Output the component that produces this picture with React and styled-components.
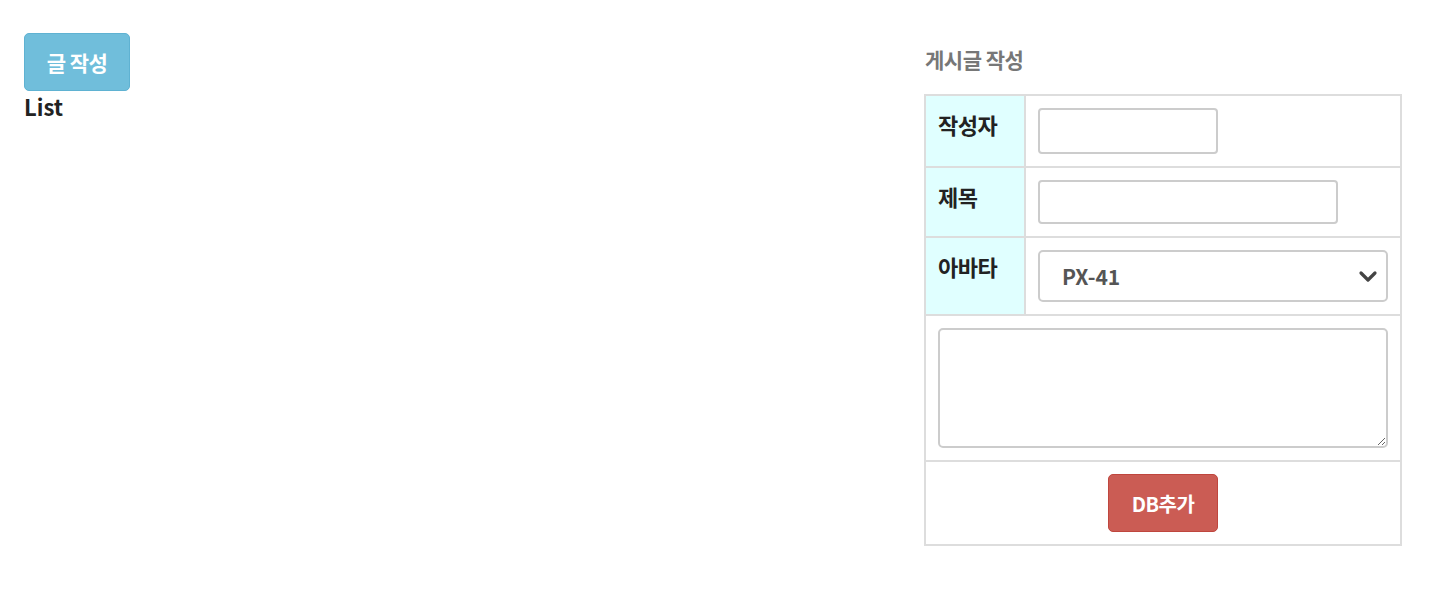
import styled, { createGlobalStyle } from "styled-components";

const GlobalStyle = createGlobalStyle`
  body {
    margin: 0;
    background: #fff;
    font-family: "Noto Sans CJK KR", "Noto Sans", sans-serif;
  }
`;

const Page = styled.div`
  display: flex;
  justify-content: space-between;
  padding: 33px 44px 0 24px;
`;

const ListSide = styled.div`
  display: flex;
  flex-direction: column;
  align-items: flex-start;
`;

const Button = styled.button`
  background: ${(p) => (p.$danger ? "#cb5c54" : "#70bedb")};
  border: 1px solid ${(p) => (p.$danger ? "#bf463e" : "#5fb2d2")};
  color: #fff;
  width: ${(p) => p.$width || 106}px;
  height: 58px;
  padding: 0;
  border-radius: 5px;
  font-family: "Noto Sans CJK KR", sans-serif;
  font-weight: 700;
  font-size: ${(p) => (p.$danger ? 20 : 21)}px;
  letter-spacing: -0.5px;
  cursor: pointer;
`;

const ListTitle = styled.div`
  font-size: 22px;
  font-weight: 700;
  color: #222;
  line-height: 34px;
  margin-top: -2px;
`;

const FormSide = styled.div`
  width: 478px;
  padding-top: 14px;
`;

const FormTitle = styled.h3`
  margin: 0 0 23px 1px;
  font-size: 21px;
  font-weight: 700;
  color: #777;
  line-height: 24px;
  letter-spacing: -0.5px;
`;

const Table = styled.table`
  width: 100%;
  border-collapse: collapse;
  border: 2px solid #ddd;
`;

const Label = styled.th`
  width: 100px;
  background: #e0ffff;
  border: 2px solid #ddd;
  text-align: left;
  vertical-align: top;
  padding: 13px 12px 10px;
  font-size: 22px;
  font-weight: 700;
  color: #222;
  line-height: 30px;
  letter-spacing: -0.5px;
`;

const Cell = styled.td`
  border: 2px solid #ddd;
  padding: ${(p) => p.$pad || "12px 12px"};
  text-align: ${(p) => (p.$center ? "center" : "left")};
  vertical-align: top;
`;

const Input = styled.input`
  display: block;
  box-sizing: border-box;
  width: ${(p) => p.$width}px;
  height: ${(p) => p.$height}px;
  border: 2px solid #ccc;
  border-radius: 4px;
  font-size: 18px;
`;

const SelectWrap = styled.div`
  position: relative;
  width: 350px;
`;

const Select = styled.select`
  display: block;
  box-sizing: border-box;
  width: 350px;
  height: 52px;
  border: 2px solid #ccc;
  border-radius: 5px;
  background: #fff;
  padding: 0 22px;
  appearance: none;
  font-family: "Noto Sans CJK KR", sans-serif;
  font-size: 21px;
  font-weight: 700;
  color: #555;
`;

const Chevron = styled.svg`
  position: absolute;
  right: 10px;
  top: 20px;
  width: 20px;
  height: 13px;
  pointer-events: none;
`;

const TextArea = styled.textarea`
  display: block;
  box-sizing: border-box;
  width: 450px;
  height: 120px;
  border: 2px solid #ccc;
  border-radius: 5px;
  resize: vertical;
`;

export default function App() {
  return (
    <>
      <GlobalStyle />
      <Page>
        <ListSide>
          <Button>글 작성</Button>
          <ListTitle>List</ListTitle>
        </ListSide>
        <FormSide>
          <FormTitle>게시글 작성</FormTitle>
          <Table>
            <tbody>
              <tr>
                <Label>작성자</Label>
                <Cell>
                  <Input $width={180} $height={46} />
                </Cell>
              </tr>
              <tr>
                <Label>제목</Label>
                <Cell>
                  <Input $width={300} $height={44} />
                </Cell>
              </tr>
              <tr>
                <Label>아바타</Label>
                <Cell>
                  <SelectWrap>
                    <Select defaultValue="PX-41">
                      <option>PX-41</option>
                    </Select>
                    <Chevron viewBox="0 0 20 13">
                      <path
                        d="M3 3 L10 10 L17 3"
                        fill="none"
                        stroke="#444"
                        strokeWidth="3.2"
                        strokeLinecap="round"
                        strokeLinejoin="round"
                      />
                    </Chevron>
                  </SelectWrap>
                </Cell>
              </tr>
              <tr>
                <Cell colSpan={2}>
                  <TextArea />
                </Cell>
              </tr>
              <tr>
                <Cell colSpan={2} $center $pad="12px 12px 12px">
                  <Button $danger $width={110}>DB추가</Button>
                </Cell>
              </tr>
            </tbody>
          </Table>
        </FormSide>
      </Page>
    </>
  );
}
